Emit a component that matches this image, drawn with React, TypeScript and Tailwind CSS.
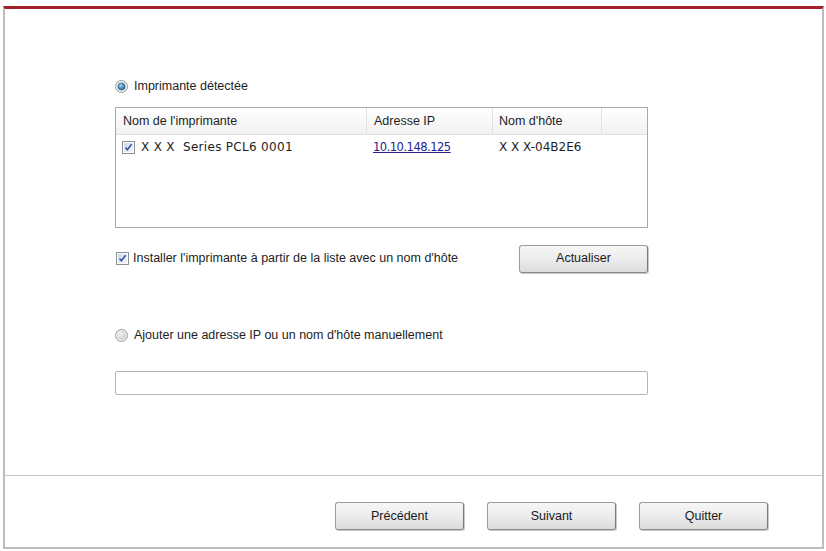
import React from 'react';

const labelFont = { fontFamily: '"Liberation Sans", Arial, sans-serif' };
const dataFont = { fontFamily: '"DejaVu Sans", Verdana, sans-serif' };

function Radio({ checked }: { checked?: boolean }) {
  return (
    <svg width="13" height="13" viewBox="0 0 13 13" className="shrink-0">
      <defs>
        <radialGradient id={checked ? 'rOn' : 'rOff'} cx="0.4" cy="0.35" r="0.7">
          <stop offset="0" stopColor={checked ? '#9fd6f5' : '#f4f4f4'} />
          <stop offset="1" stopColor={checked ? '#1c5f8c' : '#c9c9c9'} />
        </radialGradient>
      </defs>
      <circle cx="6.5" cy="6.5" r="6" fill="#eef0f2" stroke="#9a9a9a" strokeWidth="1" />
      {checked ? (
        <circle cx="6.5" cy="6.5" r="3.6" fill="url(#rOn)" stroke="#1d4c6e" strokeWidth="0.6" />
      ) : (
        <circle cx="6.5" cy="6.5" r="4.4" fill="url(#rOff)" />
      )}
    </svg>
  );
}

function Check() {
  return (
    <svg width="13" height="13" viewBox="0 0 13 13" className="shrink-0">
      <defs>
        <linearGradient id="cb" x1="0" y1="0" x2="1" y2="1">
          <stop offset="0" stopColor="#cfd8e4" />
          <stop offset="1" stopColor="#f4f6f9" />
        </linearGradient>
      </defs>
      <rect x="0.5" y="0.5" width="12" height="12" fill="#fff" stroke="#8e8f8f" />
      <rect x="2" y="2" width="9" height="9" fill="url(#cb)" />
      <path d="M3.5 6.6 L5.4 8.8 L9.6 3.3" fill="none" stroke="#2b58a8" strokeWidth="1.6" />
    </svg>
  );
}

function Btn({ label }: { label: string }) {
  return (
    <button className="h-[28px] w-[129px] rounded-[3px] border border-[#9c9c9c] border-r-[#7a7a7a] border-b-[#8a8a8a] bg-gradient-to-b from-[#f6f6f6] via-[#ececec] to-[#dcdcdc] text-[12.5px] text-[#1a1a1a] shadow-[1px_1px_0_#c8c8c8]">
      {label}
    </button>
  );
}

export default function App() {
  return (
    <div className="w-[826px] h-[551px] bg-white pt-[6px] pl-[3px]" style={labelFont}>
      <div className="w-[821px] h-[543px] border-t-[3px] border-t-[#a3202b] border-l-2 border-r-2 border-b-2 border-[#bdbdbd] flex flex-col">
        <div className="h-[466px] pl-[110px] flex flex-col text-[12.5px] text-[#1e1e1e]">
          <div className="mt-[69px] h-[16px] flex items-center gap-[6px]">
            <Radio checked />
            <span>Imprimante détectée</span>
          </div>

          <div className="mt-[13px] w-[533px] h-[121px] border border-[#a8a8a8] bg-white">
            <div className="flex h-[27px] border-b border-[#e0e0e0] bg-gradient-to-b from-white to-[#f1f1f1]">
              <div className="w-[251px] pl-[7px] flex items-center border-r border-[#e2e2e2]">Nom de l'imprimante</div>
              <div className="w-[126px] pl-[7px] flex items-center border-r border-[#e2e2e2]">Adresse IP</div>
              <div className="w-[109px] pl-[6px] flex items-center border-r border-[#e2e2e2]">Nom d'hôte</div>
              <div className="flex-1" />
            </div>
            <div className="flex h-[24px] items-center" style={dataFont}>
              <div className="w-[251px] pl-[6px] flex items-center gap-[6px]">
                <Check />
                <span className="text-[12px] tracking-[0.3px]">X X X&nbsp; Series PCL6 0001</span>
              </div>
              <div className="w-[126px] pl-[6px]">
                <span className="underline text-[#28238f] text-[11.5px] tracking-[-0.5px]">10.10.148.125</span>
              </div>
              <div className="w-[109px] pl-[6px] text-[12px]">X X X-04B2E6</div>
            </div>
          </div>

          <div className="mt-[17px] w-[533px] h-[27px] flex items-center justify-between">
            <div className="flex items-center gap-[4px] pl-[1px]">
              <Check />
              <span>Installer l'imprimante à partir de la liste avec un nom d'hôte</span>
            </div>
            <Btn label="Actualiser" />
          </div>

          <div className="mt-[55px] h-[16px] flex items-center gap-[6px]">
            <Radio />
            <span>Ajouter une adresse IP ou un nom d'hôte manuellement</span>
          </div>

          <div className="mt-[28px] w-[533px] h-[24px] border border-[#b4b4b4] rounded-[2px] bg-white" />
        </div>

        <div className="border-t border-[#c4c4c4]" />

        <div className="mt-[26px] pl-[330px] flex gap-[23px]">
          <Btn label="Précédent" />
          <Btn label="Suivant" />
          <Btn label="Quitter" />
        </div>
      </div>
    </div>
  );
}
